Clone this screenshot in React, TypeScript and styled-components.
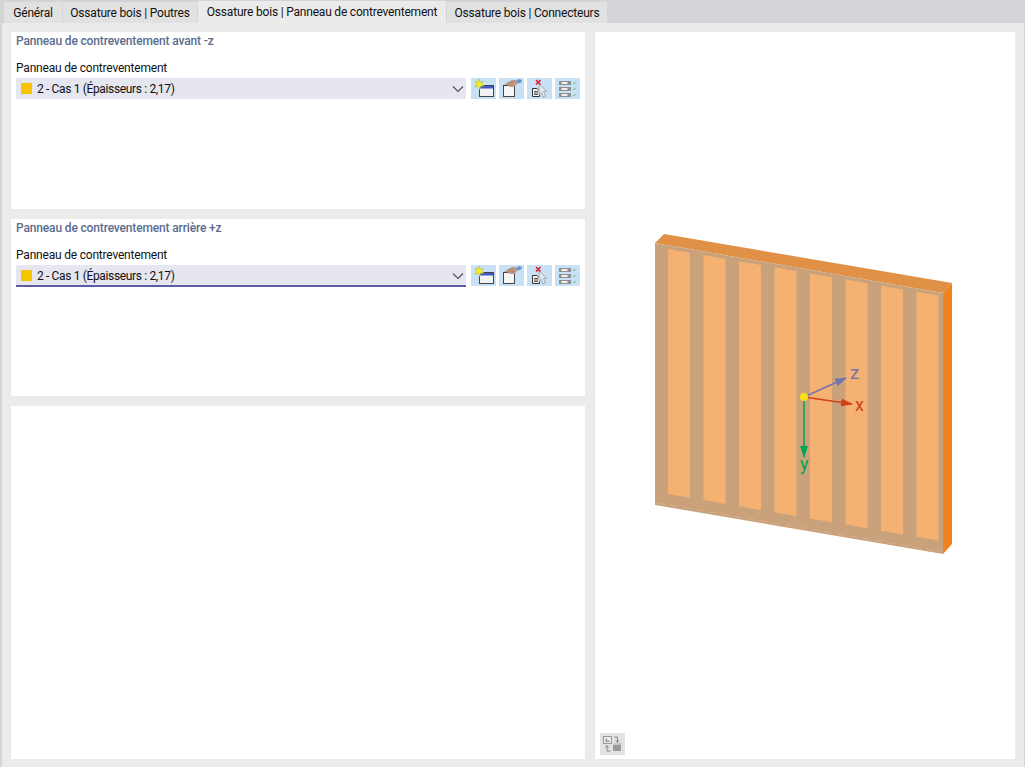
import React from "react";
import styled, { createGlobalStyle } from "styled-components";

const GlobalStyle = createGlobalStyle`
  html, body {
    margin: 0;
    padding: 0;
    background: #d4d4d8;
  }
  * {
    box-sizing: border-box;
  }
`;

const Page = styled.div`
  width: 1025px;
  height: 767px;
  overflow: hidden;
  display: flex;
  flex-direction: column;
  font-family: Roboto, "Noto Sans", sans-serif;
  font-size: 12px;
  color: #111;
  background: #d4d4d8;
`;

const TabBar = styled.div`
  display: flex;
  height: 23px;
  padding: 2px 0 0 4px;
  flex: none;
`;

const Tab = styled.div<{ $width: number; $active?: boolean }>`
  width: ${(p) => p.$width}px;
  height: ${(p) => (p.$active ? 22 : 21)}px;
  margin-top: ${(p) => (p.$active ? -1 : 0)}px;
  display: flex;
  align-items: center;
  justify-content: center;
  white-space: nowrap;
  letter-spacing: -0.2px;
  background: ${(p) => (p.$active ? "#ebebeb" : "#e1e1e1")};
  border-right: 1px solid #d4d4d8;
`;

const Body = styled.div`
  flex: 1;
  min-height: 0;
  margin: 0 1px 0 2px;
  padding: 9px 9px 8px 9px;
  display: grid;
  grid-template-columns: 574px 420px;
  column-gap: 10px;
  background: #ebebeb;
`;

const LeftColumn = styled.div`
  display: grid;
  grid-template-rows: 177px 177px 353px;
  row-gap: 10px;
`;

const Panel = styled.section`
  background: #fff;
  padding: 2px 5px;
`;

const SectionTitle = styled.div`
  height: 15px;
  line-height: 15px;
  font-weight: 500;
  font-size: 12px;
  letter-spacing: -0.15px;
  color: #5c6c8f;
`;

const FieldLabel = styled.div`
  margin-top: 11px;
  height: 16px;
  line-height: 16px;
  letter-spacing: -0.2px;
`;

const FieldRow = styled.div`
  margin-top: 2px;
  display: flex;
  align-items: flex-start;
`;

const Select = styled.div<{ $focused?: boolean }>`
  width: 450px;
  height: ${(p) => (p.$focused ? 22 : 21)}px;
  padding: ${(p) => (p.$focused ? "1px" : "0")} 1px 0 5px;
  margin-right: 5px;
  display: flex;
  align-items: center;
  gap: 5px;
  background: #e6e6f0;
  border-bottom: ${(p) => (p.$focused ? "2px solid #5d5da3" : "none")};
`;

const Swatch = styled.span`
  width: 11px;
  height: 11px;
  background: #f6c500;
  flex: none;
`;

const SelectText = styled.span`
  flex: 1;
  letter-spacing: -0.35px;
`;

const IconButton = styled.button`
  width: 25px;
  height: 21px;
  margin-left: 3px;
  padding: 0;
  border: none;
  background: #c8e1f5;
  display: flex;
  align-items: center;
  justify-content: center;
  &:first-of-type {
    margin-left: 0;
  }
`;

const Viewport = styled.section`
  position: relative;
  background: #fff;
`;

const ModelSvg = styled.svg`
  display: block;
  width: 420px;
  height: 727px;
`;

const CornerButton = styled.button`
  position: absolute;
  left: 5px;
  bottom: 4px;
  width: 25px;
  height: 22px;
  padding: 0;
  border: none;
  background: #e2e2e2;
  display: flex;
  align-items: center;
  justify-content: center;
`;

const Chevron = () => (
  <svg width="14" height="14" viewBox="0 0 14 14" fill="none">
    <path d="M2 4.5 L7 9.5 L12 4.5" stroke="#555" strokeWidth="1.2" />
  </svg>
);

const NewIcon = () => (
  <svg width="25" height="21" viewBox="0 0 25 21">
    <rect x="8.5" y="7.5" width="14" height="11" fill="#f2f2f2" stroke="#444" />
    <rect x="9" y="8" width="13" height="2.5" fill="#3f58c8" />
    <path
      d="M8 1 L9 4.2 L12.5 3 L10.6 6 L13 8.2 L9.8 8 L8.5 11.5 L7 8.2 L3.5 9 L5.6 6 L4 3.2 L6.8 4.3 Z"
      fill="#f5ee20"
      stroke="#a9b54d"
      strokeWidth="0.5"
    />
  </svg>
);

const EditIcon = () => (
  <svg width="25" height="21" viewBox="0 0 25 21">
    <rect x="4.5" y="7.5" width="11" height="11" fill="#f6f6f6" stroke="#444" />
    <path d="M5 7 L9 4 L13 2 L17 2 L19 5 L15 9 L11 9 L8 7 Z" fill="#c09a86" />
    <path d="M9 5 L14 4 M10 7 L15 6" stroke="#9a7a6a" strokeWidth="0.6" />
    <path d="M17 3 L20 1 L23 2 L22 4.5 L19 5.5 Z" fill="#6a94cf" />
  </svg>
);

const DeleteIcon = () => (
  <svg width="25" height="21" viewBox="0 0 25 21">
    <path d="M5.5 10.5 H10 L12.5 13 V18.5 H5.5 Z" fill="#f6f6f6" stroke="#333" />
    <path d="M7 13.5 H11 M7 15 H11 M7 16.5 H11" stroke="#333" strokeWidth="0.8" />
    <path
      d="M12 6 L12 16.5 L14.2 14.5 L16 19 L18.5 18 L16.5 13.5 L20 13.5 Z"
      fill="#e3e6ea"
      stroke="#989da4"
      strokeWidth="0.8"
    />
    <path d="M9 2 L13.5 6.5 M13.5 2 L9 6.5" stroke="#e01c2c" strokeWidth="1.6" />
  </svg>
);

const ListIcon = () => (
  <svg width="25" height="21" viewBox="0 0 25 21">
    {[3, 9, 15].map((y) => (
      <g key={y}>
        <rect x="4" y={y} width="12" height="4" fill="#8f8f8f" />
        <rect x="6.5" y={y + 1} width="6" height="2" fill="#f0f0f0" />
        <path d={`M18 ${y + 2} l1 1 l1.8 -2.4`} fill="none" stroke="#5cc08a" strokeWidth="0.9" />
      </g>
    ))}
  </svg>
);

const SyncIcon = () => (
  <svg width="21" height="18" viewBox="0 0 21 18">
    <rect x="1.5" y="1.5" width="8" height="7" fill="#ededed" stroke="#9a9a9a" />
    <path d="M3.5 7 V3.5 H5 V5.5 H7.5 V7 Z" fill="#9a9a9a" />
    <rect x="11" y="10" width="8" height="6" fill="#9a9a9a" />
    <path d="M11 10 L13 8 H20 L19 10 Z" fill="#c4c4c4" />
    <path d="M12 2 H15.5 V7 M14 5.5 L15.5 7.5 L17 5.5" fill="none" stroke="#888" />
    <path d="M8.5 16 H5 V11 M3.5 12.5 L5 10.5 L6.5 12.5" fill="none" stroke="#888" />
  </svg>
);

const OX = 595;
const OY = 32;
const shift = (points: number[][]) => points.map(([x, y]) => `${x - OX},${y - OY}`).join(" ");

const STRIPE_SLOPE = 0.172;
const stripes = Array.from({ length: 8 }, (_, i) => {
  const x0 = 668 + 35.5 * i;
  const x1 = x0 + 22;
  const yTop = (x: number) => 249 + STRIPE_SLOPE * (x - 668);
  const yBottom = (x: number) => 494 + STRIPE_SLOPE * (x - 668);
  return shift([
    [x0, yTop(x0)],
    [x1, yTop(x1)],
    [x1, yBottom(x1)],
    [x0, yBottom(x0)],
  ]);
});

const ArrowHead = ({ id, color }: { id: string; color: string }) => (
  <marker id={id} markerWidth="12" markerHeight="8" refX="11" refY="4" orient="auto" markerUnits="userSpaceOnUse">
    <path d="M0 0 L12 4 L0 8 Z" fill={color} />
  </marker>
);

const WallModel = () => (
  <ModelSvg viewBox="0 0 420 727">
    <defs>
      <ArrowHead id="arrow-z" color="#7474a8" />
      <ArrowHead id="arrow-x" color="#d2401a" />
      <ArrowHead id="arrow-y" color="#00a651" />
    </defs>
    <polygon points={shift([[655, 243], [664, 234], [952, 283], [943, 293]])} fill="#e09146" />
    <polygon points={shift([[943, 293], [952, 283], [952, 544], [943, 554]])} fill="#f0831e" />
    <polygon points={shift([[655, 243], [943, 293], [943, 554], [655, 505]])} fill="#c9a27c" />
    <line x1={62} y1={471} x2={348} y2={520} stroke="#d6b08c" strokeWidth="1" strokeDasharray="8 5" />
    {stripes.map((points) => (
      <polygon key={points} points={points} fill="#f4b172" />
    ))}
    <line x1={209} y1={365} x2={251} y2={346} stroke="#7474a8" strokeWidth="1.5" markerEnd="url(#arrow-z)" />
    <line x1={209} y1={365} x2={257} y2={372} stroke="#d2401a" strokeWidth="1.5" markerEnd="url(#arrow-x)" />
    <line x1={209} y1={365} x2={209} y2={425} stroke="#00a651" strokeWidth="1.5" markerEnd="url(#arrow-y)" />
    <circle cx={209} cy={365} r={4} fill="#f7e017" />
    <text x={255} y={347} fontSize="19" fill="#7474a8">z</text>
    <text x={260} y={379} fontSize="18" fill="#d2401a">x</text>
    <text x={205} y={438} fontSize="18" fill="#00a651">y</text>
  </ModelSvg>
);

const tabs = [
  { label: "Général", width: 59 },
  { label: "Ossature bois | Poutres", width: 135 },
  { label: "Ossature bois | Panneau de contreventement", width: 249, active: true },
  { label: "Ossature bois | Connecteurs", width: 161 },
];

const BracingField = ({ focused }: { focused?: boolean }) => (
  <>
    <FieldLabel>Panneau de contreventement</FieldLabel>
    <FieldRow>
      <Select $focused={focused}>
        <Swatch />
        <SelectText>2 - Cas 1 (Épaisseurs : 2,17)</SelectText>
        <Chevron />
      </Select>
      <IconButton><NewIcon /></IconButton>
      <IconButton><EditIcon /></IconButton>
      <IconButton><DeleteIcon /></IconButton>
      <IconButton><ListIcon /></IconButton>
    </FieldRow>
  </>
);

const App: React.FunctionComponent = () => (
  <Page>
    <GlobalStyle />
    <TabBar>
      {tabs.map((tab) => (
        <Tab key={tab.label} $width={tab.width} $active={tab.active}>
          {tab.label}
        </Tab>
      ))}
    </TabBar>
    <Body>
      <LeftColumn>
        <Panel>
          <SectionTitle>Panneau de contreventement avant -z</SectionTitle>
          <BracingField />
        </Panel>
        <Panel>
          <SectionTitle>Panneau de contreventement arrière +z</SectionTitle>
          <BracingField focused />
        </Panel>
        <Panel />
      </LeftColumn>
      <Viewport>
        <WallModel />
        <CornerButton><SyncIcon /></CornerButton>
      </Viewport>
    </Body>
  </Page>
);

export default App;
